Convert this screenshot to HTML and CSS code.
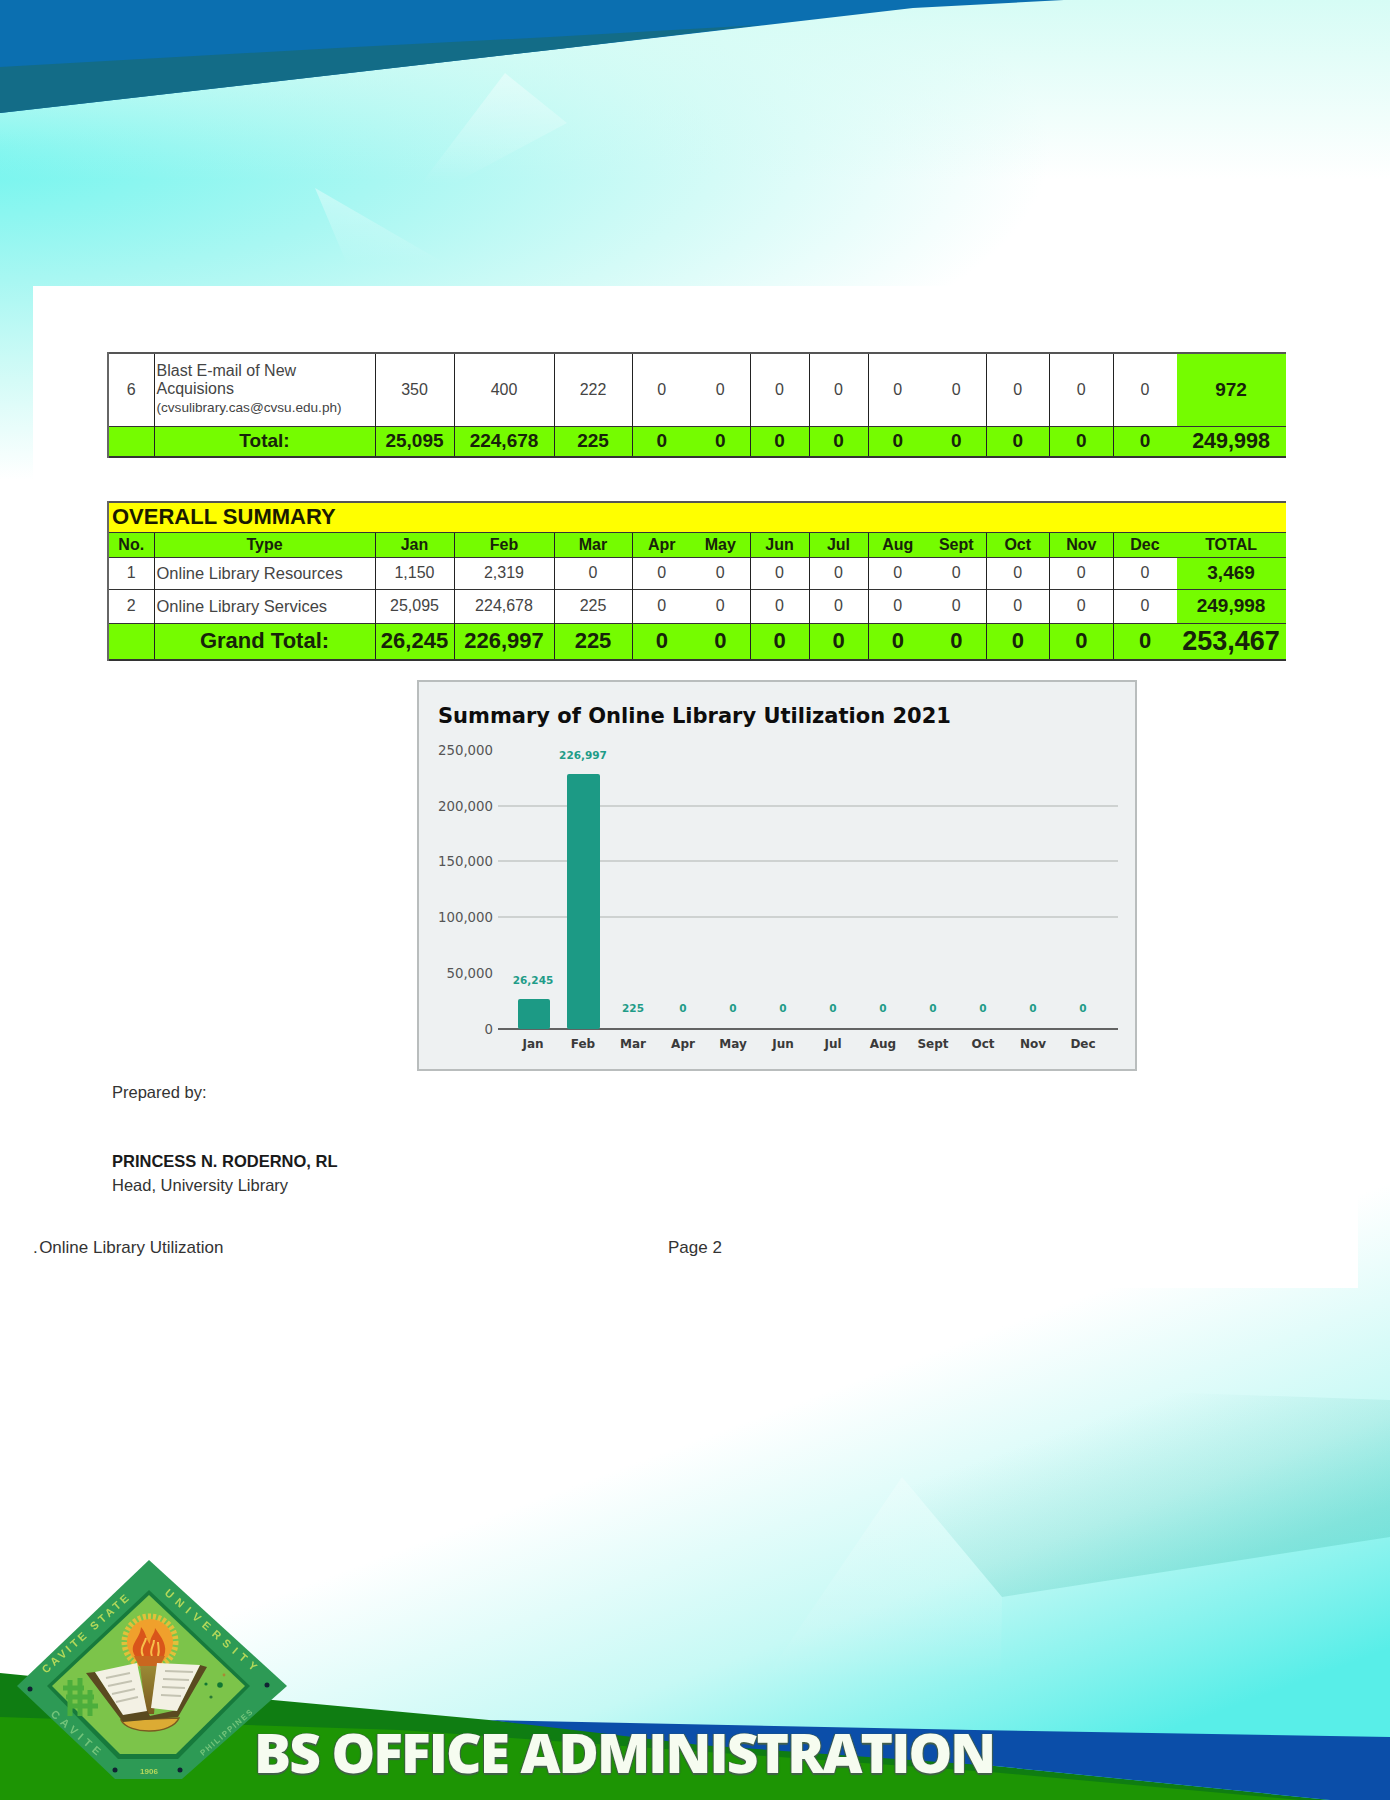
FILE: index.html
```html
<!DOCTYPE html>
<html lang="en">
<head>
    <meta charset="UTF-8">
    <meta name="viewport" content="width=device-width, initial-scale=1.0">
    <title>Online Library Utilization</title>
    <link rel="stylesheet" href="styles.css">
</head>
<body>

    <!-- page artwork behind the sheet -->
    <svg class="artwork" viewBox="0 0 1390 1800" width="1390" height="1800" aria-hidden="true">
        <defs>
            <radialGradient id="topGlow" gradientUnits="userSpaceOnUse" cx="0" cy="0" r="1100" gradientTransform="translate(-50 150) scale(1 0.3)">
                <stop offset="0" stop-color="#6ff5ee"/>
                <stop offset="0.4" stop-color="#a8f7f2"/>
                <stop offset="0.7" stop-color="#d4fbf7"/>
                <stop offset="1" stop-color="#ffffff"/>
            </radialGradient>
            <linearGradient id="topTint" x1="0" y1="0" x2="0" y2="1">
                <stop offset="0" stop-color="#d6fcf5"/>
                <stop offset="1" stop-color="#d6fcf5" stop-opacity="0"/>
            </linearGradient>
            <linearGradient id="bottomGlow" gradientUnits="userSpaceOnUse" x1="1100" y1="1290" x2="1252" y2="1700">
                <stop offset="0" stop-color="#ffffff"/>
                <stop offset="0.5" stop-color="#c6f9f5"/>
                <stop offset="1" stop-color="#58eee8"/>
            </linearGradient>
            <linearGradient id="ridge" x1="0" y1="0" x2="0" y2="1">
                <stop offset="0" stop-color="#ffffff" stop-opacity="0.4"/>
                <stop offset="0.8" stop-color="#ffffff" stop-opacity="0"/>
            </linearGradient>
            <linearGradient id="facet" gradientUnits="userSpaceOnUse" x1="1150" y1="1400" x2="1210" y2="1570">
                <stop offset="0" stop-color="#3fb8a8" stop-opacity="0"/>
                <stop offset="1" stop-color="#3fb8a8" stop-opacity="0.28"/>
            </linearGradient>
            <linearGradient id="stem" x1="0" y1="0" x2="0" y2="1">
                <stop offset="0" stop-color="#9a8a35"/>
                <stop offset="1" stop-color="#7a5a20"/>
            </linearGradient>
            <path id="edgeA" d="M46 1674 L131 1598"/>
            <path id="edgeB" d="M164 1594 L254 1672"/>
            <path id="edgeC" d="M50 1715 L97 1756"/>
            <path id="edgeD" d="M203 1756 L253 1713"/>
        </defs>

        <rect width="1390" height="600" fill="url(#topGlow)"/>
        <rect width="1390" height="180" fill="url(#topTint)"/>
        <rect y="1100" width="1390" height="700" fill="url(#bottomGlow)"/>

        <!-- faint light facets -->
        <polygon points="505,73 567,123 399,213" fill="url(#ridge)"/>
        <polygon points="315,188 479,283 355,283" fill="url(#ridge)"/>
        <polygon points="902,1477 1002,1597 1000,1730 730,1730" fill="url(#ridge)" opacity="0.6"/>
        <polygon points="902,1477 1100,1390 1390,1400 1390,1537 1002,1597" fill="url(#facet)"/>

        <!-- top corner band -->
        <polygon points="0,0 1064,0 913,8 550,50 0,113" fill="#0b6fb0"/>
        <polygon points="0,67 355,47 550,37 760,25 550,50 0,113" fill="#136c87"/>

        <!-- bottom bands -->
        <polygon points="0,1673 273,1700 489,1720 995,1766 1330,1800 0,1800" fill="#0f7d12"/>
        <polygon points="489,1720 974,1730 1390,1737 1390,1800 1330,1800 995,1766 700,1745" fill="#0b4ea9"/>
        <polygon points="0,1717 400,1730 990,1772 1300,1800 0,1800" fill="#1d9504"/>

        <!-- university seal -->
        <g class="seal">
            <polygon points="149,1560 287,1686 182,1779 115,1779 17,1686" fill="#2d9a55"/>
            <polygon points="149,1590 250,1686 178,1759 118,1759 47,1686" fill="#177a3c"/>
            <polygon points="149,1595 245,1686 176,1754 120,1754 52,1686" fill="#7cc44a"/>

            <text class="seal-text"><textPath href="#edgeA" textLength="112">CAVITE STATE</textPath></text>
            <text class="seal-text"><textPath href="#edgeB" textLength="118">UNIVERSITY</textPath></text>
            <text class="seal-text seal-dim"><textPath href="#edgeC" textLength="62">CAVITE</textPath></text>
            <text class="seal-text seal-dim seal-small"><textPath href="#edgeD" textLength="66">PHILIPPINES</textPath></text>
            <text class="seal-text seal-small" x="149" y="1774" text-anchor="middle">1906</text>

            <circle cx="30" cy="1689" r="2.5" fill="#123"/>
            <circle cx="267" cy="1685" r="2.5" fill="#123"/>
            <circle cx="115" cy="1770" r="2.5" fill="#123"/>
            <circle cx="180" cy="1770" r="2.5" fill="#123"/>

            <circle cx="150" cy="1642" r="25" fill="none" stroke="#e2c03a" stroke-width="7" stroke-dasharray="3 2"/>
            <circle cx="150" cy="1642" r="23" fill="#f0a02c"/>
            <path d="M135 1656 C128 1644 140 1640 141 1627 C147 1634 146 1640 150 1644 C150 1636 155 1634 155 1628 C162 1638 168 1646 164 1656 Z" fill="#d9551a"/>
            <path d="M143 1656 C139 1648 145 1644 146 1638 M152 1656 C149 1650 154 1646 154 1640 M158 1656 C160 1650 158 1646 158 1642" fill="none" stroke="#f7c04a" stroke-width="2"/>
            <polygon points="134,1656 165,1656 160,1666 139,1666" fill="#c9671f"/>
            <polygon points="140,1666 158,1666 154,1714 146,1714" fill="url(#stem)"/>

            <path d="M121 1720 C128 1735 172 1735 179 1718 Z" fill="#dcab34" stroke="#7a5a20" stroke-width="1.5"/>
            <polygon points="86,1673 95,1672 123,1714 147,1710 150,1716 177,1710 200,1665 207,1667 178,1717 123,1722" fill="#5a4a20"/>
            <polygon points="95,1672 137,1663 147,1711 123,1715" fill="#f3f1e4"/>
            <polygon points="157,1663 200,1665 177,1711 151,1708" fill="#f3f1e4"/>
            <path d="M106 1678 L130 1673 M108 1686 L132 1681 M112 1694 L135 1689 M116 1702 L138 1697 M165 1671 L193 1672 M163 1679 L189 1680 M162 1687 L185 1688 M161 1695 L181 1696" stroke="#c4c3b2" stroke-width="2" fill="none"/>

            <path d="M70 1680 L70 1716 M80 1678 L80 1716 M90 1690 L90 1716 M63 1688 L84 1688 M66 1697 L94 1697 M70 1706 L98 1706" stroke="#4cae3c" stroke-width="5" fill="none"/>
            <circle cx="220" cy="1685" r="2.8" fill="#173"/>
            <circle cx="206" cy="1684" r="1.6" fill="#173"/>
            <circle cx="224" cy="1675" r="1.4" fill="#a83"/>
            <circle cx="211" cy="1697" r="1.6" fill="#2a7a35"/>
        </g>
    </svg>

    <div class="sheet">
        <div class="tables">
            <table class="report">
                <colgroup>
                    <col class="c-no"><col class="c-type"><col class="c-jan"><col class="c-feb"><col class="c-mar">
                    <col class="c-m"><col class="c-m"><col class="c-m"><col class="c-m"><col class="c-m"><col class="c-m">
                    <col class="c-w"><col class="c-w"><col class="c-w"><col class="c-total">
                </colgroup>
                <tr class="row-blast">
                    <td>6</td>
                    <td class="left">Blast E-mail of New<br>Acquisions<br><small>(cvsulibrary.cas@cvsu.edu.ph)</small></td>
                    <td>350</td><td>400</td><td>222</td>
                    <td>0</td><td class="join">0</td><td>0</td><td>0</td><td>0</td><td class="join">0</td>
                    <td>0</td><td>0</td><td>0</td>
                    <td class="join lime strong">972</td>
                </tr>
                <tr class="row-total lime strong">
                    <td></td>
                    <td>Total:</td>
                    <td>25,095</td><td>224,678</td><td>225</td>
                    <td>0</td><td class="join">0</td><td>0</td><td>0</td><td>0</td><td class="join">0</td>
                    <td>0</td><td>0</td><td>0</td>
                    <td class="join big">249,998</td>
                </tr>
            </table>

            <table class="report summary">
                <colgroup>
                    <col class="c-no"><col class="c-type"><col class="c-jan"><col class="c-feb"><col class="c-mar">
                    <col class="c-m"><col class="c-m"><col class="c-m"><col class="c-m"><col class="c-m"><col class="c-m">
                    <col class="c-w"><col class="c-w"><col class="c-w"><col class="c-total">
                </colgroup>
                <tr class="row-title">
                    <td colspan="15">OVERALL SUMMARY</td>
                </tr>
                <tr class="row-head lime">
                    <td>No.</td><td>Type</td><td>Jan</td><td>Feb</td><td>Mar</td>
                    <td>Apr</td><td class="join">May</td><td>Jun</td><td>Jul</td><td>Aug</td><td class="join">Sept</td>
                    <td>Oct</td><td>Nov</td><td>Dec</td><td class="join">TOTAL</td>
                </tr>
                <tr class="row-a">
                    <td>1</td><td class="left wide">Online Library Resources</td>
                    <td>1,150</td><td>2,319</td><td>0</td>
                    <td>0</td><td class="join">0</td><td>0</td><td>0</td><td>0</td><td class="join">0</td>
                    <td>0</td><td>0</td><td>0</td>
                    <td class="join lime strong">3,469</td>
                </tr>
                <tr class="row-b">
                    <td>2</td><td class="left wide">Online Library Services</td>
                    <td>25,095</td><td>224,678</td><td>225</td>
                    <td>0</td><td class="join">0</td><td>0</td><td>0</td><td>0</td><td class="join">0</td>
                    <td>0</td><td>0</td><td>0</td>
                    <td class="join lime strong">249,998</td>
                </tr>
                <tr class="row-grand lime strong">
                    <td></td><td>Grand Total:</td>
                    <td>26,245</td><td>226,997</td><td>225</td>
                    <td>0</td><td class="join">0</td><td>0</td><td>0</td><td>0</td><td class="join">0</td>
                    <td>0</td><td>0</td><td>0</td>
                    <td class="join huge">253,467</td>
                </tr>
            </table>
        </div>

        <figure class="chart">
            <svg viewBox="-1 0 716 387" width="716" height="387">
                <text class="chart-title" x="18" y="41">Summary of Online Library Utilization 2021</text>

                <line class="grid" x1="78" x2="698" y1="124" y2="124"/>
                <line class="grid" x1="78" x2="698" y1="179" y2="179"/>
                <line class="grid" x1="78" x2="698" y1="235" y2="235"/>
                <line class="axis" x1="78" x2="698" y1="347" y2="347"/>

                <text class="tick" x="73" y="73">250,000</text>
                <text class="tick" x="73" y="129">200,000</text>
                <text class="tick" x="73" y="184">150,000</text>
                <text class="tick" x="73" y="240">100,000</text>
                <text class="tick" x="73" y="296">50,000</text>
                <text class="tick" x="73" y="352">0</text>

                <rect class="bar" x="98" y="317" width="32" height="30" rx="2"/>
                <rect class="bar" x="147" y="92" width="33" height="255" rx="2"/>

                <text class="value" x="113" y="302">26,245</text>
                <text class="value" x="163" y="77">226,997</text>
                <text class="value" x="213" y="330">225</text>
                <text class="value" x="263" y="330">0</text>
                <text class="value" x="313" y="330">0</text>
                <text class="value" x="363" y="330">0</text>
                <text class="value" x="413" y="330">0</text>
                <text class="value" x="463" y="330">0</text>
                <text class="value" x="513" y="330">0</text>
                <text class="value" x="563" y="330">0</text>
                <text class="value" x="613" y="330">0</text>
                <text class="value" x="663" y="330">0</text>

                <text class="month" x="113" y="366">Jan</text>
                <text class="month" x="163" y="366">Feb</text>
                <text class="month" x="213" y="366">Mar</text>
                <text class="month" x="263" y="366">Apr</text>
                <text class="month" x="313" y="366">May</text>
                <text class="month" x="363" y="366">Jun</text>
                <text class="month" x="413" y="366">Jul</text>
                <text class="month" x="463" y="366">Aug</text>
                <text class="month" x="513" y="366">Sept</text>
                <text class="month" x="563" y="366">Oct</text>
                <text class="month" x="613" y="366">Nov</text>
                <text class="month" x="663" y="366">Dec</text>
            </svg>
        </figure>

        <div class="signoff">
            <p class="prepared">Prepared by:</p>
            <p class="name">PRINCESS N. RODERNO, RL</p>
            <p class="role">Head, University Library</p>
        </div>

        <div class="page-foot">
            <span class="foot-title">.&#8202;Online Library Utilization</span>
            <span>Page 2</span>
        </div>
    </div>

    <div class="banner-title">BS OFFICE ADMINISTRATION</div>

</body>
</html>
```

FILE: styles.css
```css
html {
    background-color: #fff;
}
body {
    font-family: "Liberation Sans", Arial, sans-serif;
    margin: 0;
    width: 1390px;
    height: 1800px;
    position: relative;
    overflow: hidden;
    color: #333;
}
.artwork {
    position: absolute;
    top: 0;
    left: 0;
    z-index: -1;
}
.seal {
    filter: blur(0.5px);
}
.seal-text {
    font-family: "Liberation Sans", sans-serif;
    font-size: 11px;
    font-weight: bold;
    fill: #b4d85a;
}
.seal-dim {
    fill: #74c47a;
}
.seal-small {
    font-size: 8px;
}

.sheet {
    background-color: #fff;
    width: 1325px;
    height: 1002px;
    margin-left: 33px;
    position: absolute;
    top: 286px;
    padding-top: 66px;
    box-sizing: border-box;
}
.tables {
    margin-left: 74px;
    width: 1177.5px;
}

/* tables */
.report {
    width: 1177.5px;
    border-collapse: collapse;
    table-layout: fixed;
    border-top: 2px solid #555;
    border-bottom: 2px solid #333;
    font-size: 16px;
}
.summary {
    margin-top: 43px;
}
.report td {
    padding: 0;
    text-align: center;
    vertical-align: middle;
    border-left: 1px solid #222;
    border-top: 1px solid #333;
    color: #444;
    overflow: hidden;
    white-space: nowrap;
}
.report tr td:first-child {
    border-left: 2px solid #666;
}
.report td.join {
    border-left: none;
}
.report td.left {
    text-align: left;
    padding-left: 2px;
}
.report td.wide {
    font-size: 16.5px;
}
.report small {
    font-size: 13.6px;
}
.c-no { width: 46px; }
.c-type { width: 221px; }
.c-jan { width: 79px; }
.c-feb { width: 100px; }
.c-mar { width: 78px; }
.c-m { width: 59px; }
.c-w { width: 63.5px; }
.c-total { width: 109px; }

.lime {
    background-color: #75fc00;
}
.report .strong td,
.report td.strong {
    font-weight: bold;
    color: #17230a;
    font-size: 19px;
}
.row-blast {
    height: 73px;
    line-height: 18px;
}
.row-total {
    height: 31px;
}
.report .row-total td.big {
    font-size: 21.5px;
}
.row-title {
    height: 30px;
    background-color: #ff0;
}
.report .row-title td {
    text-align: left;
    padding-left: 3px;
    font-size: 22px;
    font-weight: bold;
    color: #1a1a00;
}
.row-head {
    height: 25px;
}
.report .row-head td {
    font-weight: bold;
    font-size: 16px;
    color: #17230a;
}
.row-a {
    height: 32px;
}
.row-b {
    height: 34px;
}
.row-grand {
    height: 37px;
}
.report .row-grand td {
    font-size: 22px;
}
.report .row-grand td.huge {
    font-size: 27px;
}

/* chart */
.chart {
    margin: 19px 0 0 384px;
    width: 716px;
    height: 387px;
    border: 2px solid #b9bdbd;
    background-color: #eef1f2;
}
.chart svg {
    display: block;
}
.chart-title {
    font-family: "DejaVu Sans", Verdana, sans-serif;
    font-size: 21px;
    font-weight: bold;
    fill: #0d0d0d;
}
.grid {
    stroke: #c3c7c6;
    stroke-width: 1.5;
}
.axis {
    stroke: #333;
    stroke-width: 1.5;
}
.bar {
    fill: #1c9a85;
}
.tick {
    font-family: "DejaVu Sans", Verdana, sans-serif;
    font-size: 13.3px;
    fill: #555;
    text-anchor: end;
}
.value {
    font-family: "DejaVu Sans", Verdana, sans-serif;
    font-size: 10.5px;
    font-weight: bold;
    fill: #1f9c88;
    text-anchor: middle;
}
.month {
    font-family: "DejaVu Sans", Verdana, sans-serif;
    font-size: 12px;
    font-weight: bold;
    fill: #3a3a3a;
    text-anchor: middle;
}

/* sign-off */
.signoff {
    margin: 11px 0 0 79px;
    font-size: 16.5px;
    line-height: 20px;
}
.signoff p {
    margin: 0;
}
.signoff .name {
    margin-top: 49px;
    font-weight: bold;
    color: #1a1a1a;
}
.signoff .role {
    margin-top: 4px;
}
.page-foot {
    display: flex;
    align-items: baseline;
    margin-top: 43px;
    font-size: 17px;
    line-height: 20px;
}
.foot-title {
    width: 635px;
}

.banner-title {
    position: absolute;
    left: 254px;
    top: 1714px;
    font-family: "Open Sans", sans-serif;
    font-size: 55px;
    font-weight: 800;
    line-height: 76px;
    letter-spacing: -1.9px;
    white-space: nowrap;
    color: #f6fcf0;
    text-shadow: 0 2px 1px #43604a, 1px 0 1px #43604a, -1px 0 1px #3d5a45;
}
```
